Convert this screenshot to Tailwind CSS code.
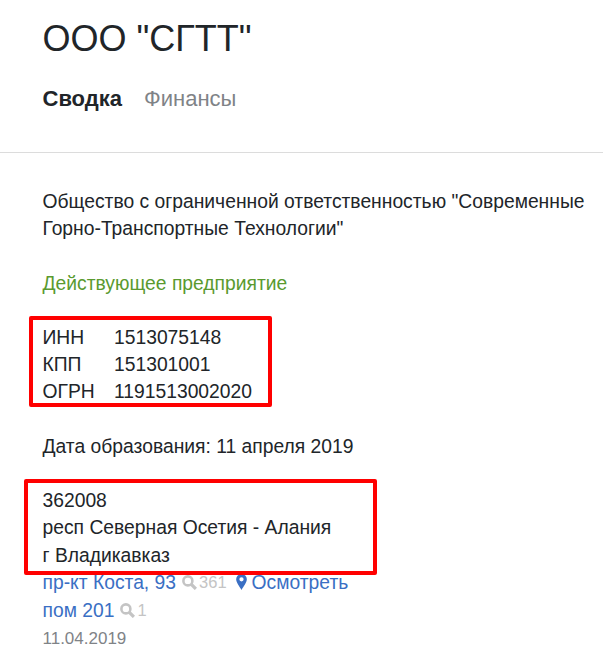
<!DOCTYPE html>
<html lang="ru">
<head>
    <meta charset="UTF-8">
    <title>ООО "СГТТ"</title>
    <script src="https://cdn.jsdelivr.net/npm/@tailwindcss/browser@4"></script>
</head>
<body class="bg-white font-['Liberation_Sans',Arial,sans-serif] text-[19.3px] leading-[27.2px] text-[#212529] h-[652px] overflow-hidden relative">
    <header class="pl-[42.500px] pt-[15px] h-[153px] border-b border-[#dcdcdc]">
        <h1 class="text-[36px] leading-[48px] font-normal">ООО "СГТТ"</h1>
        <nav class="flex gap-[22px] mt-[21px] text-[22px] leading-[30px]">
            <span class="font-bold">Сводка</span>
            <span class="text-[#7f8387]">Финансы</span>
        </nav>
    </header>

    <main class="pl-[42.500px] pr-[10px] pt-[35px]">
        <p class="mb-[27.200px]">Общество с ограниченной ответственностью "Современные Горно-Транспортные Технологии"</p>
        <p class="mb-[27.200px] text-[#5a9a2f]">Действующее предприятие</p>

        <div class="mb-[27.200px] grid grid-cols-[71.500px_1fr]">
            <span>ИНН</span><span>1513075148</span>
            <span>КПП</span><span>151301001</span>
            <span>ОГРН</span><span>1191513002020</span>
        </div>

        <p class="mb-[27.200px]">Дата образования: 11 апреля 2019</p>

        <address class="not-italic">
            <div>362008</div>
            <div>респ Северная Осетия - Алания</div>
            <div>г Владикавказ</div>
            <div class="flex items-center text-[#3a6fc4]">
                <span>пр-кт Коста, 93</span>
                <svg class="w-[15px] h-[15px] ml-[6px] text-[#c4c4c4]" viewBox="0 0 14 14" fill="none" stroke="currentColor">
                    <circle cx="5.500" cy="5.500" r="4.200" stroke-width="2.400"/>
                    <path d="M8.500 8.500L13 13" stroke-width="3"/>
                </svg>
                <span class="text-[16.500px] text-[#c4c4c4] ml-[2px]">361</span>
                <svg class="w-[11px] h-[16px] ml-[9px]" viewBox="0 0 10 15" fill="currentColor">
                    <path fill-rule="evenodd" d="M5 0a5 5 0 0 1 5 5c0 3-3 6.500-5 10C3 11.500 0 8 0 5a5 5 0 0 1 5-5zm0 3a2 2 0 1 0 0 4 2 2 0 0 0 0-4z"/>
                </svg>
                <span class="ml-[5px]">Осмотреть</span>
            </div>
            <div class="flex items-center mt-[1px] text-[#3a6fc4]">
                <span>пом 201</span>
                <svg class="w-[15px] h-[15px] ml-[6px] text-[#c4c4c4]" viewBox="0 0 14 14" fill="none" stroke="currentColor">
                    <circle cx="5.500" cy="5.500" r="4.200" stroke-width="2.400"/>
                    <path d="M8.500 8.500L13 13" stroke-width="3"/>
                </svg>
                <span class="text-[16.500px] text-[#c4c4c4] ml-[2px]">1</span>
            </div>
            <div class="mt-[1px] text-[17px] text-[#7f8387]">11.04.2019</div>
        </address>
    </main>

    <!-- red annotation boxes drawn over the page -->
    <div class="absolute left-[29px] top-[316px] w-[243px] h-[91px] border-[4px] border-[#ff0000] rounded-[2px]"></div>
    <div class="absolute left-[24px] top-[479px] w-[353px] h-[96px] border-[4px] border-[#ff0000] rounded-[2px]"></div>
</body>
</html>
